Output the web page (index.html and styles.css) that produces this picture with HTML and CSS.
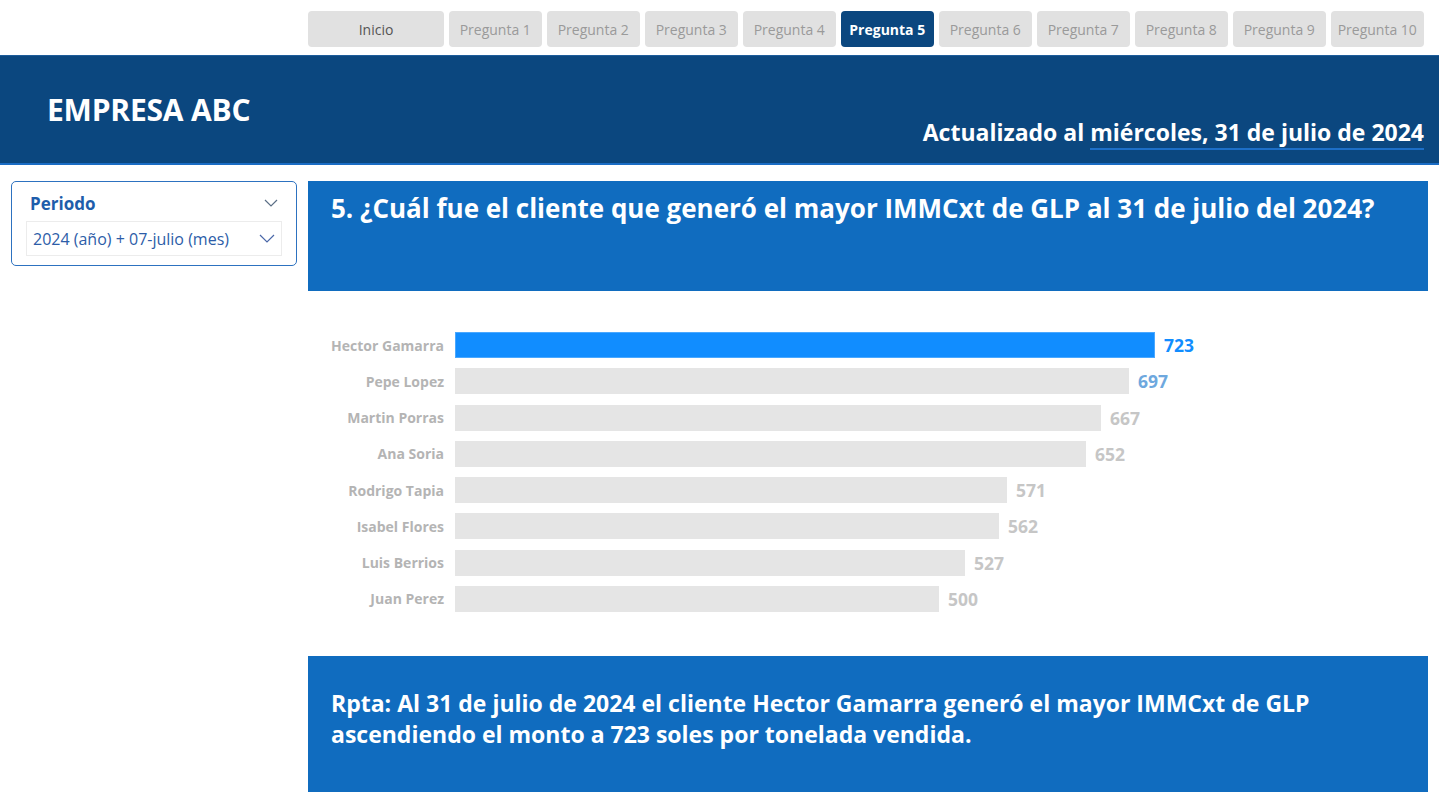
FILE: index.html
```html
<!DOCTYPE html>
<html lang="es">
<head>
<meta charset="utf-8">
<title>Empresa ABC - Pregunta 5</title>
<link rel="stylesheet" href="styles.css">
</head>
<body>
<div class="page">
  <nav class="topnav">
    <a class="tab tab-home">Inicio</a>
    <a class="tab">Pregunta 1</a>
    <a class="tab">Pregunta 2</a>
    <a class="tab">Pregunta 3</a>
    <a class="tab">Pregunta 4</a>
    <a class="tab tab-active">Pregunta 5</a>
    <a class="tab">Pregunta 6</a>
    <a class="tab">Pregunta 7</a>
    <a class="tab">Pregunta 8</a>
    <a class="tab">Pregunta 9</a>
    <a class="tab">Pregunta 10</a>
  </nav>
  <header class="banner">
    <h1 class="brand">EMPRESA ABC</h1>
    <div class="updated">Actualizado al <span class="updated-date">miércoles, 31 de julio de 2024</span></div>
  </header>
  <main class="main">
    <aside class="sidebar">
      <div class="slicer">
        <div class="slicer-head">
          <span class="slicer-title">Periodo</span>
          <svg class="chev" width="14" height="8" viewBox="0 0 14 8"><path d="M1 1 L7 7 L13 1" fill="none" stroke="#5b6f86" stroke-width="1.2"/></svg>
        </div>
        <div class="slicer-select">
          <span>2024 (año) + 07-julio (mes)</span>
          <svg class="chev" width="16" height="9" viewBox="0 0 16 9"><path d="M1 1 L8 8 L15 1" fill="none" stroke="#4a67a8" stroke-width="1.2"/></svg>
        </div>
      </div>
    </aside>
    <section class="content">
      <div class="question">5. ¿Cuál fue el cliente que generó el mayor IMMCxt de GLP al 31 de julio del 2024?</div>
      <div class="chart">
        <div class="row"><span class="label">Hector Gamarra</span><div class="bar bar-top" style="width:700px"></div><span class="value value-top">723</span></div>
        <div class="row"><span class="label">Pepe Lopez</span><div class="bar" style="width:674px"></div><span class="value value-second">697</span></div>
        <div class="row"><span class="label">Martin Porras</span><div class="bar" style="width:646px"></div><span class="value">667</span></div>
        <div class="row"><span class="label">Ana Soria</span><div class="bar" style="width:631px"></div><span class="value">652</span></div>
        <div class="row"><span class="label">Rodrigo Tapia</span><div class="bar" style="width:552px"></div><span class="value">571</span></div>
        <div class="row"><span class="label">Isabel Flores</span><div class="bar" style="width:544px"></div><span class="value">562</span></div>
        <div class="row"><span class="label">Luis Berrios</span><div class="bar" style="width:510px"></div><span class="value">527</span></div>
        <div class="row"><span class="label">Juan Perez</span><div class="bar" style="width:484px"></div><span class="value">500</span></div>
      </div>
      <div class="answer">Rpta: Al 31 de julio de 2024 el cliente Hector Gamarra generó el mayor IMMCxt de GLP ascendiendo el monto a 723 soles por tonelada vendida.</div>
    </section>
  </main>
</div>
</body>
</html>
```
FILE: styles.css
```css
* { box-sizing: border-box; }
html, body { margin: 0; padding: 0; background: #ffffff; }
body {
  font-family: "Open Sans", "Noto Sans", "Liberation Sans", sans-serif;
  width: 1439px;
  height: 808px;
  overflow: hidden;
}
.page { display: flex; flex-direction: column; }

.topnav {
  height: 55px;
  display: flex;
  gap: 4.5px;
  padding: 11px 0 0 308px;
  align-items: flex-start;
}
.tab {
  width: 93.5px;
  height: 36px;
  background: #e1e1e1;
  border-radius: 4px;
  color: #9a9a9a;
  font-size: 14px;
  display: flex;
  align-items: center;
  justify-content: center;
  white-space: nowrap;
}
.tab-home { width: 136px; color: #555555; }
.tab-active { background: #0b477f; color: #ffffff; font-weight: 700; }

.banner {
  height: 110px;
  background: #0b477f;
  border-top: 1px solid #1d5c9a;
  border-bottom: 2px solid #1a6cc4;
  display: flex;
  justify-content: space-between;
  align-items: flex-start;
  padding: 0 15px 0 47px;
  color: #ffffff;
}
.brand {
  margin: 33px 0 0;
  font-size: 30px;
  font-weight: 700;
  letter-spacing: -0.2px;
}
.updated {
  margin-top: 60px;
  font-size: 23px;
  font-weight: 700;
}
.updated-date {
  border-bottom: 2px solid #1d6fc8;
  padding-bottom: 0;
}

.main {
  display: flex;
  padding-top: 16px;
}
.sidebar {
  width: 308px;
  padding-left: 11px;
  padding-right: 11px;
}
.slicer {
  height: 85px;
  border: 1px solid #2d72c0;
  border-radius: 5px;
  padding: 8px 14px 0 14px;
}
.slicer-head {
  display: flex;
  justify-content: space-between;
  align-items: center;
  padding: 0 4px 0 4px;
  height: 26px;
}
.slicer-title {
  color: #1e5dab;
  font-weight: 700;
  font-size: 17px;
}
.slicer-select {
  margin-top: 5px;
  height: 35px;
  border: 1px solid #ececec;
  display: flex;
  align-items: center;
  justify-content: space-between;
  padding: 0 6px 0 6px;
  color: #2d5da8;
  font-size: 16px;
}

.content {
  width: 1120px;
  display: flex;
  flex-direction: column;
}
.question {
  height: 110px;
  background: #106cbf;
  color: #ffffff;
  font-weight: 700;
  font-size: 26px;
  line-height: 34px;
  padding: 10px 23px 0;
  white-space: nowrap;
}
.chart {
  height: 365px;
  padding-top: 36px;
  display: flex;
  flex-direction: column;
}
.row {
  height: 36.25px;
  display: flex;
  align-items: center;
}
.label {
  width: 136px;
  text-align: right;
  color: #b4b4b4;
  font-weight: 700;
  font-size: 14px;
  margin-right: 11px;
  white-space: nowrap;
}
.bar {
  height: 26px;
  background: #e5e5e5;
}
.bar-top { background: #118dff; box-shadow: inset 0 0 0 1px #4aa8ff; }
.value {
  margin-left: 9px;
  color: #c6c6c6;
  font-weight: 700;
  font-size: 17.5px;
}
.value-top { color: #118dff; }
.value-second { color: #6ea8de; }

.answer {
  height: 136px;
  background: #106cbf;
  color: #ffffff;
  font-weight: 700;
  font-size: 23px;
  line-height: 31px;
  padding: 32px 60px 0 23px;
}
```
